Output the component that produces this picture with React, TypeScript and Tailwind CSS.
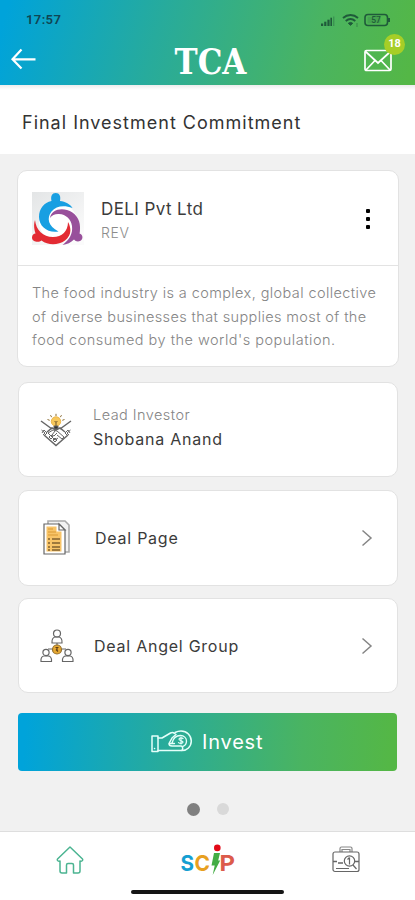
import React from 'react';

function StatusIcons() {
  return (
    <svg width="72" height="16" viewBox="0 0 72 16" fill="none" className="text-[#1f5a3a]">
      <g fill="currentColor">
        <rect x="1" y="11.5" width="2.2" height="2.5" />
        <rect x="4.2" y="9.7" width="2.2" height="4.3" />
        <rect x="7.4" y="7.7" width="2.2" height="6.3" />
        <rect x="10.4" y="5.7" width="1.6" height="8.3" />
        <rect x="13" y="4.5" width="1.4" height="9.5" opacity=".35" />
      </g>
      <g stroke="currentColor" strokeWidth="1.9">
        <path d="M23 6c4.500-4 10.500-4 15 0M25.700 9c3-2.500 6.600-2.500 9.600 0" />
        <path d="M28.300 11.300c1.500-1.200 2.900-1.200 4.400 0l-2.200 2z" fill="currentColor" strokeWidth="1" />
      </g>
      <path d="M37 11v4" stroke="currentColor" opacity=".5" />
      <rect x="45" y="2.500" width="22.500" height="11" rx="3" stroke="currentColor" strokeWidth="1.600" />
      <rect x="47.500" y="4.700" width="13" height="6.600" fill="currentColor" opacity=".2" />
      <path d="M69 6v4" stroke="currentColor" strokeWidth="2" />
      <text x="56" y="11" textAnchor="middle" fontSize="8.500" fontWeight="500" fill="currentColor" fontFamily="Roboto, sans-serif">57</text>
    </svg>
  );
}

function CompanyLogo() {
  return (
    <svg width="52" height="53" viewBox="0 0 52 53" fill="none" className="shrink-0">
      <defs>
        <linearGradient id="tile" x1="0" y1="0" x2=".7" y2="1">
          <stop stopColor="#e3e5e6" /><stop offset="1" stopColor="#fbfbfb" />
        </linearGradient>
      </defs>
      <rect width="52" height="53" fill="url(#tile)" />
      <circle cx="26" cy="30" r="19" fill="#fff" />
      <path d="M3 28C4 38 11 45 21 45C30 45 36 39 36 30C40 37 39 44 33 48.500C26 53.500 16 53.500 9.500 48.500C7 51 0 50 0 45.500C0 43 2 41.500 3.500 41.500C2 37 1.500 32 3 28Z" fill="#e32b33" />
      <path d="M18 26C19 19 27 15.500 35 18C43 20.500 48 27 48 35C48 38 48 40 47.500 41.500C51 42.500 51.500 47 48.500 48.800C46 50 43.500 49.500 42 47.500C39 50.500 35 52.500 30.500 53C37 48 41 42 40 34C39 27 34 22.500 27 22C23 21.800 20 23 18 26Z" fill="#98509b" />
      <path d="M19.500 9C18.500 4 20 1 23.700 1C27.500 1 29 4 28 9C33.500 9.500 38 12 40.500 16C32 13 24 14 19.500 19.500C14.500 26 16 34 26.500 39.500C16 41.500 7 34.500 7 25C7 17 12 10.500 19.500 9Z" fill="#189fe2" />
    </svg>
  );
}

function InvestorIcon() {
  return (
    <svg width="34" height="34" viewBox="0 0 34 34" fill="none" stroke="#666" strokeWidth="1">
      <path d="M17 .800V3M11.500 2.200l1.200 2M22.500 2.200l-1.200 2M8.500 6.500l2.200.8M25.500 6.500l-2.200.8" stroke="#8a6c35" />
      <circle cx="17" cy="8.500" r="4.700" fill="#f7c85c" stroke="#eeb74a" />
      <path d="M15.600 8l1.400 1.500L18.400 8M17 9.500V14" stroke="#6d5225" />
      <path d="M15 13h4v3h-4z" fill="#333" />
      <path d="M2 8l11 8M32 8l-11 8" strokeWidth="1.500" />
      <path d="M2.500 17l3.500 3-2 2M31.500 17l-3.500 3 2 2M3 20l2-3 3 3-3 3M31 20l-2-3-3 3 3 3" />
      <path d="M5 22l12 10.500L29 22M8 19l5-4 4 2 4-2 5 4" strokeWidth="1.500" />
      <path d="M9 20l5-3 4 1 7 6-2 2-5-4M9 20l7 7 3-2M10 24l2-2 2 2-2 2zM14 27l2-2 2 2-2 2zM16 18l-3 4 2 1 3-3" />
    </svg>
  );
}

function PagesIcon() {
  return (
    <svg width="28" height="36" viewBox="0 0 28 36" fill="none" stroke="#666" strokeWidth="1.200">
      <path d="M5 4V1h17l4 4v27h-4" fill="#f3f3f3" stroke="#aaa" strokeWidth="1.600" />
      <path d="M1 4h15l6 6v24H1z" fill="#fff" />
      <path d="M3.500 6.500h10v5h5v20h-15z" fill="#f8c468" stroke="none" />
      <path d="M16 4v6h6z" fill="#fff" />
      <path d="M5 9h5M5 12h8M5 15h10" stroke="#d99a35" />
      <path d="M5 19h2M9 19h8M5 23h2M9 23h8M5 27h2M9 27h8M5 30h2M9 30h8" stroke="#80602f" strokeWidth="1.300" />
    </svg>
  );
}

function GroupIcon() {
  return (
    <svg width="34" height="34" viewBox="0 0 34 34" fill="none" stroke="#666" strokeWidth="1.200">
      <circle cx="17" cy="4.500" r="3.500" />
      <path d="M12 14c-.5-4 1.500-6 3.500-6h3c2 0 4 2 3.500 6zM17 14v3M12 20H8M22 20h4" />
      <circle cx="17" cy="20.500" r="4.500" fill="#e6a832" stroke="#95712d" />
      <path d="M15.500 18.500h3M16 20.500l2 2M17 18v4" stroke="#603e12" />
      <circle cx="6" cy="23.500" r="3.100" />
      <path d="M1 32.500c-.5-4 1.500-5.500 3-5.500h4c2 0 4 1.500 3.500 5.500z" />
      <circle cx="28" cy="23.500" r="3.100" />
      <path d="M22.500 32.500c-.5-4 1.500-5.500 3.500-5.500h4c1.500 0 3.500 1.500 3 5.500z" />
    </svg>
  );
}

function InvestIcon() {
  return (
    <svg width="42" height="24" viewBox="0 0 42 24" fill="none" stroke="#e4fffa" strokeWidth="1.500" strokeLinejoin="round" strokeLinecap="round">
      <path d="M1 6h6v15.500H1zM3.500 18.500h.1" />
      <path d="M7 8h4l8.500-5c1.500-.8 3-.5 4 .5l1.500 1-4 3.500-3 5.500c0 2 1.500 2.500 3 2.500h9c2 0 2.500 4.500 0 4.500H7" />
      <path d="M24 2.500C26 1.500 28 1 30 1c6 0 10.300 4.500 10.300 10S36 20.800 30.500 20.500" />
      <path d="M21 13c1-4 4-7.500 8.500-7.500 3.500 0 6 2.500 6 5.500 0 2.500-1.500 4.500-3.500 5.300M18.500 13.500h5" strokeWidth="1.300" />
      <path d="M32 8.500c-1-1.200-4-.8-4 .8s4 1.200 4 2.800-3 1.800-4.500.5M30 7v7" strokeWidth="1.200" />
    </svg>
  );
}

function HomeIcon() {
  return (
    <svg width="28" height="28" viewBox="0 0 28 28" fill="none" stroke="#4bb491" strokeWidth="1.500" strokeLinejoin="round">
      <path d="M14 1L1.500 13c-.8 1.500.7 2.500 2.500 2V25c0 1.500.5 2 2 2h4.500v-8c0-1 .5-1.500 1.500-1.500h4c1 0 1.500.5 1.500 1.500v8H22c1.500 0 2-.5 2-2V15c1.800.5 3.300-.5 2.500-2z" />
    </svg>
  );
}

function ScipLogo() {
  return (
    <svg width="56" height="32" viewBox="0 0 56 32" fontFamily="Inter, sans-serif" fontWeight="700" fontSize="22">
      <text x="0.500" y="27" textLength="13.500" lengthAdjust="spacingAndGlyphs" fill="#159fd2">S</text>
      <text x="14.500" y="27" textLength="15.500" lengthAdjust="spacingAndGlyphs" fill="#e8a020">C</text>
      <text x="39.500" y="27" textLength="15.500" lengthAdjust="spacingAndGlyphs" fill="#dc5b4b">P</text>
      <circle cx="37.300" cy="3.900" r="3.300" fill="#e30918" />
      <path d="M34 9h6l-1.800 7.500h2L32.700 31l2-9.500h-3.200z" fill="#43ad45" />
    </svg>
  );
}

function PortfolioIcon() {
  return (
    <svg width="28" height="27" viewBox="0 0 28 27" fill="none" stroke="#666" strokeWidth="1.200">
      <path d="M8 6V2.500C8 1.500 8.500 1 9.500 1h9c1 0 1.500.5 1.500 1.500V6M10 6V3.500h8V6" stroke="#888" />
      <rect x="1" y="6" width="26" height="19.500" rx="2" />
      <path d="M1 15.500h4M23 15.500h4M6 17h5" strokeWidth="1.400" />
      <circle cx="17.500" cy="15" r="5.200" fill="#fff" />
      <path d="M21 19l3.500 4M17.500 11.500v7M15.500 13.500l2-2M4 22.500h13" />
    </svg>
  );
}

function Chevron() {
  return (
    <svg width="12" height="18" viewBox="0 0 12 18" fill="none" stroke="#858585" strokeWidth="1.500">
      <path d="M1.500 1.500L10 9l-8.500 7.500" />
    </svg>
  );
}

export default function App() {
  return (
    <div className="flex h-[900px] w-[415px] flex-col overflow-hidden bg-[#f1f1f1] font-['Inter','Liberation_Sans',sans-serif] text-[#3b3b3b]">
      <header className="h-[85px] shrink-0 bg-[linear-gradient(105deg,#00a3da_2%,#27ab9c_38%,#4ab461_75%,#54b746_98%)]">
        <div className="flex h-[40px] items-center justify-between pr-[23px] pl-[26px]">
          <span className="font-['Roboto',sans-serif] text-[13px] font-semibold tracking-[0.4px] text-[#104554]">17:57</span>
          <StatusIcons />
        </div>
        <div className="grid h-[45px] grid-cols-3 pr-[22px] pl-[11px]">
          <svg className="mt-2" width="26" height="22" viewBox="0 0 26 22" fill="none" stroke="white" strokeWidth="2.200">
            <path d="M10.500 1.500L1.500 11.300l9 9.200M1.500 11.300H24.500" />
          </svg>
          <svg className="-mt-1 ml-[30px]" width="86" height="44" viewBox="0 0 86 44">
            <text x="6.500" y="37.500" textLength="72" lengthAdjust="spacingAndGlyphs" fontFamily="'DejaVu Serif Condensed','DejaVu Serif',serif" fontWeight="700" fontSize="34.500" fill="white">TCA</text>
          </svg>
          <div className="relative mt-[9px] ml-auto h-[24px] w-[30px]">
            <svg width="30" height="24" viewBox="0 0 30 24" fill="none" stroke="white" strokeWidth="1.700">
              <rect x="2" y="1.500" width="26" height="20" rx="1.500" />
              <path d="M2.500 2.500L15 14 27.500 2.500M3 21l8.500-9M27 21l-8.500-9" />
            </svg>
            <span className="absolute -top-[15px] left-[21px] flex h-[21px] w-[21px] items-center justify-center rounded-full bg-[#a6ce27] font-['Roboto',sans-serif] text-[11px] font-bold text-white">18</span>
          </div>
        </div>
      </header>

      <div className="h-[69px] shrink-0 bg-white bg-[linear-gradient(180deg,#ececec_0px,#ffffff_5px)] pt-[24px] pl-[22px]">
        <h1 className="text-[18px] leading-[27px] font-normal tracking-[1px] whitespace-nowrap text-[#333]">Final Investment Commitment</h1>
      </div>

      <main className="flex h-[677px] shrink-0 flex-col">
        <section className="mt-[16px] ml-[17px] h-[197px] w-[382px] shrink-0 rounded-[10px] border border-[#e2e2e2] bg-white">
          <div className="flex h-[95px] items-center border-b border-[#e3e3e3] pr-[28px] pl-[14px]">
            <CompanyLogo />
            <div className="ml-[17px] flex-1 pt-[6px]">
              <h2 className="text-[17px] leading-[24px] font-normal tracking-[0.4px]">DELI Pvt Ltd</h2>
              <p className="text-[14px] leading-[24px] font-light tracking-[0.6px] text-[#8c8c8c]">REV</p>
            </div>
            <div className="flex flex-col gap-[4px] pt-px">
              <i className="h-[4px] w-[4px] rounded-[1px] bg-black" />
              <i className="h-[4px] w-[4px] rounded-[1px] bg-black" />
              <i className="h-[4px] w-[4px] rounded-[1px] bg-black" />
            </div>
          </div>
          <p className="pt-[15px] pl-[14px] text-[14.500px] leading-[23.700px] font-light whitespace-nowrap text-[#858585]">
            <span className="block tracking-[0.4px]">The food industry is a complex, global collective</span>
            <span className="block tracking-[0.380px]">of diverse businesses that supplies most of the</span>
            <span className="block tracking-[0.490px]">food consumed by the world's population.</span>
          </p>
        </section>

        <section className="mt-[15px] ml-[18px] flex h-[95px] w-[380px] shrink-0 items-center rounded-[10px] border border-[#e2e2e2] bg-white pl-[20px]">
          <InvestorIcon />
          <div className="ml-[20px] pb-[5px]">
            <p className="text-[14.500px] leading-[24px] font-light tracking-[0.450px] text-[#858585]">Lead Investor</p>
            <p className="text-[16px] leading-[24px] tracking-[0.750px]">Shobana Anand</p>
          </div>
        </section>

        <section className="mt-[13px] ml-[18px] flex h-[96px] w-[380px] shrink-0 items-center rounded-[10px] border border-[#e2e2e2] bg-white pr-[24px] pl-[24px]">
          <PagesIcon />
          <span className="ml-[24px] flex-1 text-[16px] tracking-[0.750px]">Deal Page</span>
          <Chevron />
        </section>

        <section className="mt-[12px] ml-[18px] flex h-[95px] w-[380px] shrink-0 items-center rounded-[10px] border border-[#e2e2e2] bg-white pr-[24px] pl-[21px]">
          <GroupIcon />
          <span className="ml-[20px] flex-1 text-[16px] tracking-[0.750px]">Deal Angel Group</span>
          <Chevron />
        </section>

        <button className="mt-[20px] ml-[18px] flex h-[58px] w-[379px] shrink-0 items-center rounded-[4px] bg-[linear-gradient(93deg,#00a3da_2%,#27ab9c_38%,#4ab461_75%,#54b746_98%)] pl-[133px] text-white">
          <InvestIcon />
          <span className="ml-[9px] text-[20px] tracking-[0.8px]">Invest</span>
        </button>

        <div className="mt-[32px] ml-[187px] flex gap-[17px]">
          <i className="h-[13px] w-[13px] rounded-full bg-[#808080]" />
          <i className="h-[12px] w-[12px] rounded-full bg-[#d9d9d9]" />
        </div>
      </main>

      <footer className="h-[69px] shrink-0 border-t border-[#dedede] bg-white">
        <nav className="flex h-[55px] items-center justify-between pr-[55px] pl-[56px]">
          <HomeIcon />
          <ScipLogo />
          <PortfolioIcon />
        </nav>
        <div className="mx-auto mt-[3px] h-[4px] w-[153px] rounded-full bg-[#151515]" />
      </footer>
    </div>
  );
}
